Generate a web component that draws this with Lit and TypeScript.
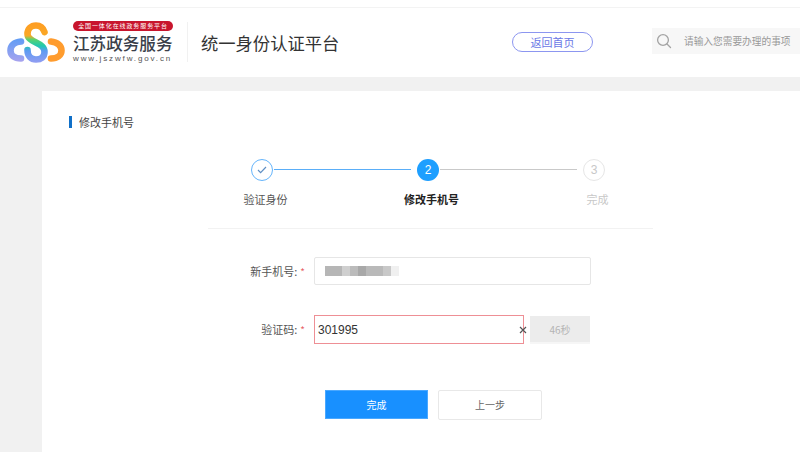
import { LitElement, html, css } from "lit";
import { customElement } from "lit/decorators.js";

@customElement("app-root")
export class AppRoot extends LitElement {
  static styles = css`
    :host { display: block; width: 800px; height: 452px; overflow: hidden; background: #f1f1f1; font-family: "Noto Sans CJK SC", "Liberation Sans", sans-serif; color: #333; }
    .strip { height: 7px; background: #fff; border-bottom: 1px solid #f3f3f3; }
    header { height: 69px; background: #fff; display: flex; align-items: flex-start; }
    .mark { width: 58px; height: 42px; margin: 14px 0 0 7px; flex: none; }
    .brand { width: 100px; margin: 13px 0 0 8px; display: flex; flex-direction: column; flex: none; }
    .pill { height: 10px; border-radius: 5px; background: #c8152d; color: #fff; font-size: 6px; line-height: 10px; text-align: center; letter-spacing: 0.9px; white-space: nowrap; }
    .cn { font-size: 16.6px; line-height: 20px; margin-top: 2px; color: #3a3f4a; white-space: nowrap; font-weight: 500; }
    .url { font-family: "Liberation Sans", sans-serif; font-size: 8px; line-height: 9px; margin-top: 1px; letter-spacing: 1.86px; color: #555; white-space: nowrap; }
    .vline { width: 1px; height: 40px; background: #f1f1f1; margin: 14px 0 0 14px; flex: none; }
    h1 { margin: 22px 0 0 13px; font-size: 17.3px; line-height: 26px; font-weight: 400; color: #333; width: 311px; white-space: nowrap; flex: none; }
    .home { box-sizing: border-box; width: 81px; height: 20px; margin: 24px 0 0 0; border: 1px solid #8c96f0; border-radius: 10px; color: #6b78e6; font-size: 11px; line-height: 18px; text-align: center; flex: none; }
    .search { width: 148px; height: 26px; margin: 20px 0 0 59px; background: #f7f7f7; display: flex; align-items: center; flex: none; }
    .search svg { width: 16px; height: 16px; margin-left: 4px; flex: none; }
    .search span { margin-left: 12px; font-size: 9.7px; color: #999; white-space: nowrap; }
    .band { height: 14px; }
    main { margin-left: 42px; height: 361px; background: #fff; padding-top: 25px; box-sizing: border-box; }
    .title { display: flex; align-items: center; margin-left: 27px; height: 12px; font-size: 11px; color: #444; white-space: nowrap; }
    .title i { width: 3px; height: 12px; background: #1070c8; margin-right: 7px; }
    .steps { display: grid; grid-template-columns: repeat(3, 166px); margin: 31px 0 0 137px; }
    .step { display: flex; flex-direction: column; align-items: center; position: relative; }
    .dot { box-sizing: border-box; width: 22px; height: 22px; border-radius: 50%; display: flex; align-items: center; justify-content: center; font-family: "Liberation Sans", sans-serif; font-size: 12px; background: #fff; }
    .done .dot { border: 1px solid #66b5fb; }
    .now .dot { background: #1e9fff; color: #fff; }
    .todo .dot { border: 1px solid #e6e6e6; color: #c8c8c8; }
    .step label { font-size: 11px; line-height: 16px; margin-top: 10px; padding-left: 7px; color: #555; white-space: nowrap; }
    .now label { color: #222; font-weight: 700; }
    .todo label { color: #c8c8c8; }
    .link { position: absolute; top: 10px; left: 95px; width: 137px; height: 1px; background: #c9c9c9; }
    .done .link { background: #5aaef8; }
    .rule { height: 1px; background: #f2f2f2; margin: 21px 0 0 166px; width: 445px; }
    .row { display: flex; align-items: flex-start; }
    .r1 { margin-top: 28px; }
    .r2 { margin-top: 29px; }
    .lab { width: 263px; text-align: right; font-size: 11px; color: #555; line-height: 28px; white-space: nowrap; flex: none; }
    .lab b { color: #e8636b; font-weight: 400; margin-left: 3px; font-size: 10px; }
    .box { box-sizing: border-box; height: 28px; margin-left: 9px; border: 1px solid #e6e6e6; border-radius: 2px; width: 277px; background: #fff; display: flex; align-items: center; padding-left: 10px; flex: none; position: relative; }
    .blur { display: flex; height: 10px; filter: blur(0.7px); }
    .blur s { display: block; height: 10px; }
    .code { width: 210px; height: 29px; border: 1px solid #ee8f95; border-radius: 0; padding-left: 3px; font-family: "Liberation Sans", "Noto Sans", sans-serif; font-size: 12px; color: #333; }
    .x { position: absolute; right: -3.5px; top: 10px; width: 8px; height: 8px; }
    .send { box-sizing: border-box; width: 60px; height: 28px; margin: 1px 0 0 6px; background: #ececec; border-bottom: 2px solid #f6f6f6; color: #b4b4b4; font-size: 10px; line-height: 27px; text-align: center; flex: none; }
    .btns { display: flex; align-items: flex-start; margin: 46px 0 0 283px; gap: 10px; }
    .btns div { box-sizing: border-box; font-size: 10px; line-height: 28px; text-align: center; }
    .primary { width: 103px; height: 29px; background: #1890ff; border: 1px solid #4aa8ff; color: #fff; }
    .ghost { width: 104px; height: 30px; background: #fff; border: 1px solid #e8e8e8; border-radius: 2px; color: #666; }
  `;

  private blocks: [number, string][] = [
    [17, "#b6b6b6"], [8, "#cfcfcf"], [8, "#bbbbbb"], [8, "#a8a8a8"], [17, "#b9b9b9"], [8, "#c8c8c8"], [8, "#f0f0f0"],
  ];

  render() {
    return html`
      <div class="strip"></div>
      <header>
        <svg class="mark" viewBox="0 0 58 42" fill="none" stroke-width="6.6" stroke-linecap="round">
          <defs>
            <linearGradient id="s" gradientUnits="userSpaceOnUse" x1="0" y1="0" x2="0" y2="40">
              <stop offset="0" stop-color="#ff9c22" />
              <stop offset="0.34" stop-color="#f9a826" />
              <stop offset="0.44" stop-color="#58d272" />
              <stop offset="0.6" stop-color="#20c8b0" />
              <stop offset="0.72" stop-color="#5d9bf2" />
              <stop offset="1" stop-color="#8f9df2" />
            </linearGradient>
            <linearGradient id="l" gradientUnits="userSpaceOnUse" x1="0" y1="16" x2="0" y2="40">
              <stop offset="0" stop-color="#5e9cf5" />
              <stop offset="1" stop-color="#a9a3ee" />
            </linearGradient>
          </defs>
          <path d="M14 19.5 C7 20 3.5 24 3.5 28.5 C3.5 33 7 36.5 14 36.5" stroke="url(#l)" />
          <path d="M44 19.5 C50.5 20 54.5 24 54.5 28.5 C54.5 33 50.5 36.5 44 36.5" stroke="#ff9c2e" />
          <path d="M37.5 10 C36 5.5 33 3.5 29 3.5 C24 3.5 20.5 7 20.5 12 C20.5 16 24 18 29 20.5 C34 23 37.5 25 37.5 30 C37.5 35 34 37.5 29 37.5 C24 37.5 20.5 34 20.5 28" stroke="url(#s)" />
        </svg>
        <div class="brand">
          <div class="pill">全国一体化在线政务服务平台</div>
          <div class="cn">江苏政务服务</div>
          <div class="url">www.jszwfw.gov.cn</div>
        </div>
        <div class="vline"></div>
        <h1>统一身份认证平台</h1>
        <div class="home">返回首页</div>
        <div class="search">
          <svg viewBox="0 0 16 16" fill="none" stroke="#a3a3a3" stroke-width="1.3" stroke-linecap="round">
            <circle cx="7" cy="7" r="5.4" /><path d="M11 11l3.5 3.5" />
          </svg>
          <span>请输入您需要办理的事项</span>
        </div>
      </header>
      <div class="band"></div>
      <main>
        <div class="title"><i></i>修改手机号</div>
        <div class="steps">
          <div class="step done">
            <i class="link"></i>
            <div class="dot">
              <svg width="10" height="8" viewBox="0 0 10 8" fill="none" stroke="#5f8fc4" stroke-width="1.2"><path d="M1 4l2.6 2.6L9 1" /></svg>
            </div>
            <label>验证身份</label>
          </div>
          <div class="step now">
            <i class="link"></i>
            <div class="dot">2</div>
            <label>修改手机号</label>
          </div>
          <div class="step todo">
            <div class="dot">3</div>
            <label>完成</label>
          </div>
        </div>
        <div class="rule"></div>
        <div class="row r1">
          <div class="lab">新手机号:<b>*</b></div>
          <div class="box">
            <div class="blur">
              ${this.blocks.map(([w, c]) => html`<s style="width:${w}px;background:${c}"></s>`)}
            </div>
          </div>
        </div>
        <div class="row r2">
          <div class="lab">验证码:<b>*</b></div>
          <div class="box code">
            301995
            <svg class="x" viewBox="0 0 8 8" stroke="#555" stroke-width="1.2"><path d="M1 1l6 6M7 1l-6 6" /></svg>
          </div>
          <div class="send">46秒</div>
        </div>
        <div class="btns">
          <div class="primary">完成</div>
          <div class="ghost">上一步</div>
        </div>
      </main>
    `;
  }
}
